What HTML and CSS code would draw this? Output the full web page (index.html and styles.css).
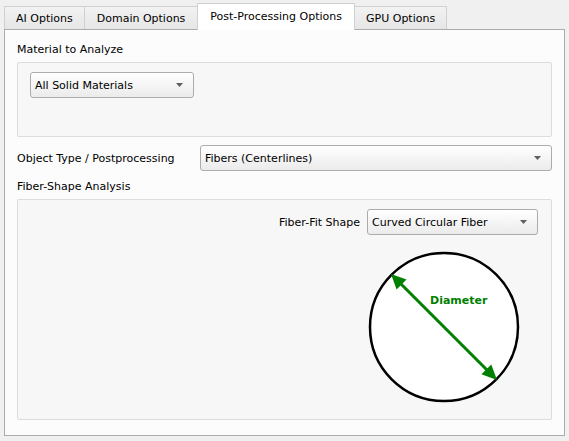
FILE: index.html
```html
<!DOCTYPE html>
<html>
<head>
<meta charset="utf-8">
<link rel="stylesheet" href="styles.css">
</head>
<body>
<div class="window">
  <div class="tabbar">
    <div class="tab">AI Options</div>
    <div class="tab tab-domain">Domain Options</div>
    <div class="tab active">Post-Processing Options</div>
    <div class="tab">GPU Options</div>
  </div>
  <div class="pane">
    <div class="label first">Material to Analyze</div>
    <div class="group group-material">
      <div class="combo combo-material">
        <span>All Solid Materials</span>
        <svg class="caret" width="7" height="4" viewBox="0 0 7 4"><polygon points="0,0 7,0 3.5,4" fill="#5f5f5f"/></svg>
      </div>
    </div>
    <div class="row">
      <div class="row-label">Object Type / Postprocessing</div>
      <div class="combo combo-wide">
        <span>Fibers (Centerlines)</span>
        <svg class="caret" width="7" height="4" viewBox="0 0 7 4"><polygon points="0,0 7,0 3.5,4" fill="#5f5f5f"/></svg>
      </div>
    </div>
    <div class="label">Fiber-Shape Analysis</div>
    <div class="group group-fiber">
      <div class="fit-row">
        <span class="fit-label">Fiber-Fit Shape</span>
        <div class="combo combo-fit">
          <span>Curved Circular Fiber</span>
          <svg class="caret" width="7" height="4" viewBox="0 0 7 4"><polygon points="0,0 7,0 3.5,4" fill="#5f5f5f"/></svg>
        </div>
      </div>
      <svg class="diagram" width="152" height="152" viewBox="0 0 152 152">
        <circle cx="76" cy="76" r="74" fill="#ffffff" stroke="#000000" stroke-width="2.5"/>
        <line x1="30" y1="30" x2="122" y2="122" stroke="#008000" stroke-width="3"/>
        <polygon points="23,23 38.5,28.6 28.6,38.5" fill="#008000"/>
        <polygon points="129,129 123.3,113.4 113.4,123.3" fill="#008000"/>
        <text x="62" y="53" class="diam-text">Diameter</text>
      </svg>
    </div>
  </div>
</div>
</body>
</html>
```

FILE: styles.css
```css
html, body {
  margin: 0;
  padding: 0;
}
body {
  background: #f0f0f0;
  font-family: "DejaVu Sans", Verdana, sans-serif;
  font-size: 11px;
  color: #000;
  width: 569px;
  height: 441px;
  overflow: hidden;
}
.window {
  padding: 3px 4px 5px 4px;
  display: flex;
  flex-direction: column;
  height: 441px;
  box-sizing: border-box;
}
.tabbar {
  display: flex;
  align-items: flex-end;
  height: 26px;
}
.tab {
  height: 23px;
  line-height: 24px;
  padding: 0 11px;
  border: 1px solid #d0d0d0;
  border-bottom: none;
  background: linear-gradient(#f2f2f2, #e6e6e6);
  margin-right: -1px;
  white-space: nowrap;
  box-sizing: border-box;
}
.tab-domain {
  padding: 0 12px;
}
.tab.active {
  height: 27px;
  line-height: 25px;
  padding: 0 12px;
  background: #ffffff;
  border-color: #d0d0d0;
  margin-bottom: -1px;
  position: relative;
  z-index: 1;
}
.pane {
  flex: 1;
  border: 1px solid #acacac;
  background: #fcfcfc;
  padding: 0 12px;
}
.label {
  line-height: 14px;
  margin-top: 9px;
}
.label.first {
  margin-top: 13px;
}
.group {
  background: #f7f7f7;
  border: 1px solid #dcdcdc;
  border-radius: 2px;
  margin-top: 5px;
}
.group-material {
  padding: 9px 12px 0;
  box-sizing: content-box;
  height: 64px;
}
.combo {
  display: flex;
  align-items: center;
  justify-content: space-between;
  height: 26px;
  box-sizing: border-box;
  border: 1px solid #acacac;
  border-radius: 3px;
  background: linear-gradient(#ffffff, #ebebeb);
  padding: 0 10px 0 4px;
  white-space: nowrap;
}
.combo-material {
  width: 164px;
}
.row {
  display: flex;
  align-items: center;
  margin-top: 8px;
}
.row-label {
  width: 183px;
}
.combo-wide {
  flex: 1;
}
.group-fiber {
  padding: 9px 13px 0 0;
  box-sizing: border-box;
  height: 221px;
}
.fit-row {
  display: flex;
  align-items: center;
  justify-content: flex-end;
  gap: 7px;
}
.combo-fit {
  width: 171px;
}
.diagram {
  display: block;
  margin: 16px 18px 0 auto;
}
.diam-text {
  font-family: "DejaVu Sans", Verdana, sans-serif;
  font-weight: bold;
  font-size: 11px;
  fill: #008000;
}
```
